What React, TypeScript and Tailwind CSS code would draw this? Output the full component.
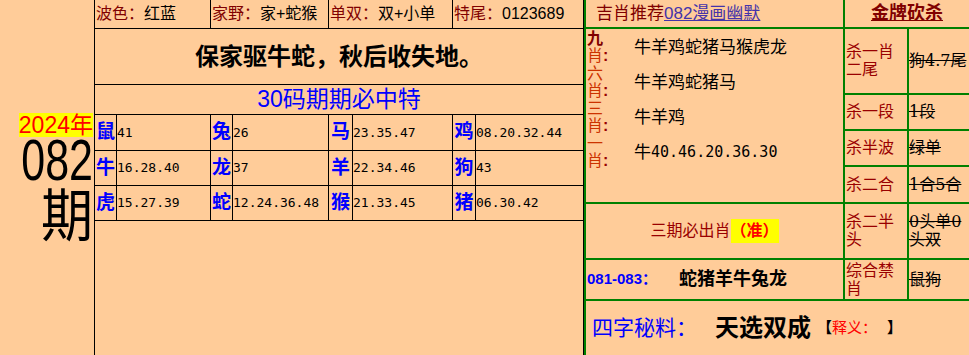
import React from "react";

const zodiacRows = [
  [
    ["鼠", "41"],
    ["兔", "26"],
    ["马", "23.35.47"],
    ["鸡", "08.20.32.44"],
  ],
  [
    ["牛", "16.28.40"],
    ["龙", "37"],
    ["羊", "22.34.46"],
    ["狗", "43"],
  ],
  [
    ["虎", "15.27.39"],
    ["蛇", "12.24.36.48"],
    ["猴", "21.33.45"],
    ["猪", "06.30.42"],
  ],
];

const picks = [
  { num: "九", text: "牛羊鸡蛇猪马猴虎龙", first: true },
  { num: "六", text: "牛羊鸡蛇猪马" },
  { num: "三", text: "牛羊鸡" },
  { num: "一", text: "牛40.46.20.36.30" },
];

const kills = [
  { label: "杀一肖二尾", value: "狗4.7尾" },
  { label: "杀一段", value: "1段" },
  { label: "杀半波", value: "绿单" },
  { label: "杀二合", value: "1合5合" },
  { label: "杀二半头", value: "0头单0头双" },
  { label: "综合禁肖", value: "鼠狗" },
];

const TopCell = ({ label, value, last }: { label: string; value: string; last?: boolean }) => (
  <div className={`flex items-center pl-[1px] text-[16px] ${last ? "" : "border-r border-black"}`}>
    <span className="text-[#800000]">{label}</span>
    <span className="text-black">{value}</span>
  </div>
);

export default function App() {
  return (
    <div className="flex h-[355px] w-[969px] overflow-hidden bg-[#ffcc99] font-['Liberation_Sans','Noto_Sans_CJK_SC',sans-serif] text-black">
      {/* issue number */}
      <div className="flex w-[95px] shrink-0 flex-col items-end justify-center border-r border-black pr-[1px]">
        <span className="bg-[#ffff00] text-[23px] leading-[24px] text-[#ff0000]">2024年</span>
        <span className="mt-[6px] mb-[13px] block scale-y-[1.35] text-[43px] leading-[34px]">082</span>
        <span className="block scale-y-[1.1] text-[52px] leading-[52px]">期</span>
      </div>

      {/* middle table */}
      <div className="flex w-[489px] shrink-0 flex-col border-r border-black">
        <div className="grid h-[29px] grid-cols-[116px_118px_124px_1fr] border-b border-black">
          <TopCell label="波色：" value="红蓝" />
          <TopCell label="家野：" value="家+蛇猴" />
          <TopCell label="单双：" value="双+小单" />
          <TopCell label="特尾：" value="0123689" last />
        </div>
        <div className="flex h-[56px] items-center justify-center border-b border-black text-[24px] font-bold">
          保家驱牛蛇，秋后收失地。
        </div>
        <div className="flex h-[30px] items-center justify-center border-b border-black text-[23px] text-[#0000ff]">
          30码期期必中特
        </div>
        <div className="grid grid-cols-[22px_94px_22px_96px_24px_100px_23px_1fr] grid-rows-[36px_35px_35px]">
          {zodiacRows.map((row, r) =>
            row.map(([animal, nums], c) => (
              <React.Fragment key={`${r}-${c}`}>
                <div className="flex items-center justify-center border-r border-b border-black text-[19px] font-bold text-[#0000ff]">
                  {animal}
                </div>
                <div
                  className={`flex items-center border-b border-black font-['DejaVu_Sans_Mono',monospace] text-[13px] ${
                    c < 3 ? "border-r" : ""
                  }`}
                >
                  {nums}
                </div>
              </React.Fragment>
            ))
          )}
        </div>
        <div className="flex-1" />
      </div>

      {/* right panel */}
      <div className="flex flex-1 flex-col border-l-2 border-[#008000]">
        <div className="flex h-[29px] shrink-0 border-b-2 border-[#008000]">
          <div className="flex w-[259px] items-center border-r-2 border-[#008000] pl-[10px] text-[17px]">
            <span className="text-[#800000]">吉肖推荐</span>
            <span className="text-[#4433aa] underline">082漫画幽默</span>
          </div>
          <div className="flex flex-1 items-center justify-center text-[18px] font-bold text-[#800000] underline">
            金牌砍杀
          </div>
        </div>

        <div className="flex shrink-0">
          <div className="flex w-[259px] flex-col border-r-2 border-[#008000]">
            <div className="h-[175px] border-b-2 border-[#008000] pt-[1px]">
              {picks.map((p) => (
                <div key={p.num} className="flex h-[35px]">
                  <div className="w-[48px] shrink-0">
                    <div className="w-[26px] pl-[1px] text-[16px] leading-[17px]">
                      <span className={p.first ? "font-bold text-[#800000]" : "text-[#cc3300]"}>{p.num}</span>
                      <span className="text-[#cc3300]">肖</span>
                      <span className="font-bold text-[#990000]">:</span>
                    </div>
                  </div>
                  <div className="flex items-center text-[17px]">
                    {p.text.startsWith("牛4") ? (
                      <>
                        牛<span className="font-['DejaVu_Sans_Mono',monospace] text-[15px]">40.46.20.36.30</span>
                      </>
                    ) : (
                      p.text
                    )}
                  </div>
                </div>
              ))}
            </div>
            <div className="flex h-[56px] items-center justify-center border-b-2 border-[#008000] text-[16px]">
              <span className="text-[#990000]">三期必出肖</span>
              <span className="bg-[#ffff00] font-bold text-[#ff0000]">（准）</span>
            </div>
            <div className="flex h-[41px] items-center border-b-2 border-[#008000] pl-[1px]">
              <span className="w-[92px] text-[15px] font-bold text-[#0000ff]">081-083：</span>
              <span className="text-[18px] font-bold">蛇猪羊牛兔龙</span>
            </div>
          </div>

          <div className="grid flex-1 grid-cols-[64px_1fr] grid-rows-[66px_36px_36px_37px_56px_41px]">
            {kills.map((k) => (
              <React.Fragment key={k.label}>
                <div className="flex items-center border-r-2 border-b-2 border-[#008000] pl-[1px] text-[16px] leading-[18px] text-[#990000]">
                  {k.label}
                </div>
                <div className="flex items-center border-b-2 border-[#008000] font-['DejaVu_Serif','Noto_Sans_CJK_SC',serif] text-[16px] leading-[18px] line-through">
                  {k.value}
                </div>
              </React.Fragment>
            ))}
          </div>
        </div>

        <div className="flex flex-1 items-center pl-[6px]">
          <span className="text-[21px] text-[#0000ff]">四字秘料：</span>
          <span className="ml-[18px] text-[24px] font-bold">天选双成</span>
          <span className="ml-[6px] text-[15px] font-bold">【</span>
          <span className="text-[15px] text-[#ff0000]">释义：</span>
          <span className="ml-[10px] text-[15px] font-bold">】</span>
        </div>
      </div>
    </div>
  );
}
